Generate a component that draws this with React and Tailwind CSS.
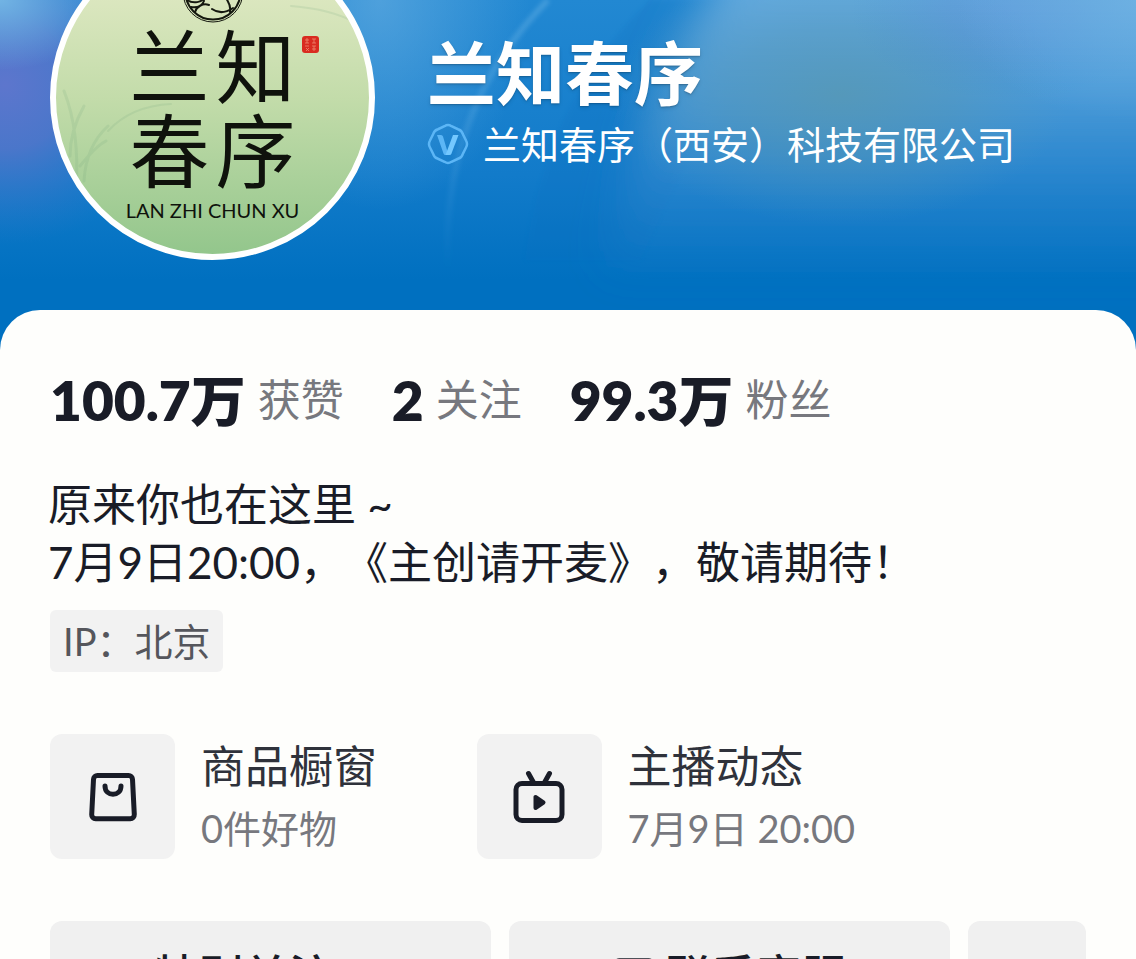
import { ChevronDown, MessageSquareText } from "lucide-react";

const STATS = [
  { value: "100.7万", label: "获赞" },
  { value: "2", label: "关注" },
  { value: "99.3万", label: "粉丝" },
];

const ENTRIES = [
  { title: "商品橱窗", note: "0件好物", Icon: BagIcon },
  { title: "主播动态", note: "7月9日 20:00", Icon: LiveIcon },
];

function BagIcon() {
  return (
    <svg viewBox="0 0 48 50" className="h-[50px] w-12" fill="none" stroke="#191c27" strokeWidth="5" strokeLinecap="round" strokeLinejoin="round">
      <path d="M8.5 3.5h31a4 4 0 0 1 4 3.8l1.8 35.2a4 4 0 0 1-4 4.2H6.7a4 4 0 0 1-4-4.2L4.5 7.3a4 4 0 0 1 4-3.8Z" />
      <path d="M16 14c0 11 16 11 16 0" />
    </svg>
  );
}

function LiveIcon() {
  return (
    <svg viewBox="0 0 52 54" className="h-[54px] w-[52px]" fill="none" stroke="#191c27" strokeWidth="5" strokeLinecap="round" strokeLinejoin="round">
      <rect x="3" y="13.5" width="46" height="37" rx="6" />
      <path d="m15.5 3.5 5 9M36.5 3.5l-5 9" />
      <path d="M22.5 27v11l8-5.5Z" fill="#191c27" strokeWidth="4" />
    </svg>
  );
}

function VerifiedIcon() {
  return (
    <svg viewBox="0 0 42 42" className="size-[42px] shrink-0" fill="none">
      <path
        d="M17.5 3.2Q21 1 24.5 3.2L31 6.2Q34.8 7.2 35.8 11L39 17.5Q41 21 39 24.5L35.8 31Q34.8 34.8 31 35.8L24.5 38.8Q21 41 17.5 38.8L11 35.8Q7.2 34.8 6.2 31L3 24.5Q1 21 3 17.5L6.2 11Q7.2 7.2 11 6.2Z"
        stroke="#5cb6f6"
        strokeWidth="2.5"
      />
      <path d="M10 12h4q1.5 0 2 1.500l5.500 18.500h-3q-1.500 0-2-1.500Z" fill="#5cb6f6" />
      <path d="M26 12h5.500l-7 18.500q-.6 1.500-2 1.500h-4Z" fill="#74c8ff" />
    </svg>
  );
}

function Emblem() {
  return (
    <svg viewBox="0 0 64 64" className="mx-auto size-16" fill="none" stroke="#15180f" strokeLinecap="round">
      <circle cx="32" cy="32" r="30" strokeWidth="1" />
      <circle cx="32" cy="32" r="27.5" strokeWidth="2" />
      <path d="M6 40c6 4 15 3 19-4M10 47c7 1 11-1 13-6M14 52c2-6 8-9 14-7M44 34c0 6 7 9 5 18M31 49c7 5 15 3 21-1" strokeWidth="2" />
    </svg>
  );
}

function Seal() {
  return (
    <svg viewBox="0 0 17 17" className="absolute left-[246px] top-[95px] size-[17px]">
      <rect width="17" height="17" rx="3" fill="#d92b20" />
      <path d="M3 4h4M5 2v5M3 7h4M10 3h4M12 3v4M10 7h4M3 10h4M4 12l3 3M7 12l-3 3M10 10h4M12 10v5M10 13h4" stroke="#ee8a72" strokeWidth="0.8" fill="none" />
    </svg>
  );
}

function Avatar() {
  return (
    <div className="relative -mt-[65px] size-[325px] shrink-0 overflow-hidden rounded-full border-6 border-white bg-linear-to-b from-[#e9edcb] via-[#c3dcaa] to-[#93c68c]">
      <svg viewBox="0 0 313 313" className="absolute inset-0 size-full" fill="none" stroke="#6fa07a" strokeLinecap="round" opacity="0.15">
        <path d="M20 250Q24 190 8 150M28 240Q30 205 52 185M14 215Q14 190 28 165M24 225Q40 205 50 200" strokeWidth="3" />
        <path d="M52 190Q75 165 115 163M235 65Q275 68 300 82" strokeWidth="2" />
      </svg>
      <div className="relative pt-[19px] text-[#0f120c]">
        <Emblem />
        <div className="mx-auto grid w-[172px] grid-cols-2 text-center text-[80px] leading-[84px]">
          <span>兰</span>
          <span>知</span>
          <span>春</span>
          <span>序</span>
        </div>
        <p className="whitespace-nowrap text-center text-[20px] leading-9">LAN ZHI CHUN XU</p>
      </div>
      <Seal />
    </div>
  );
}

function HeaderBackdrop() {
  return (
    <svg viewBox="0 0 1136 350" preserveAspectRatio="none" className="absolute inset-0 size-full" aria-hidden="true">
      <defs>
        <linearGradient id="base" x2="0" y2="1">
          <stop offset="0" stopColor="#2288d2" />
          <stop offset="0.5" stopColor="#127bca" />
          <stop offset="0.8" stopColor="#0070c0" />
        </linearGradient>
        <linearGradient id="veil" x2="0" y2="1">
          <stop offset="0" stopColor="#6fb2e4" />
          <stop offset="0.45" stopColor="#4f9cd8" stopOpacity="0.85" />
          <stop offset="0.75" stopColor="#3a8ccf" stopOpacity="0.35" />
          <stop offset="1" stopColor="#3a8ccf" stopOpacity="0" />
        </linearGradient>
        <radialGradient id="violet">
          <stop offset="0" stopColor="#5d76cd" />
          <stop offset="0.4" stopColor="#5475ca" stopOpacity="0.85" />
          <stop offset="1" stopColor="#3076c8" stopOpacity="0" />
        </radialGradient>
        <radialGradient id="sky">
          <stop offset="0" stopColor="#72b4e4" />
          <stop offset="1" stopColor="#72b4e4" stopOpacity="0" />
        </radialGradient>
        <radialGradient id="sage">
          <stop offset="0" stopColor="#5a98ae" stopOpacity="0.7" />
          <stop offset="0.5" stopColor="#5a98b2" stopOpacity="0.4" />
          <stop offset="1" stopColor="#5a9cc0" stopOpacity="0" />
        </radialGradient>
        <linearGradient id="ray" x2="0" y2="1">
          <stop offset="0" stopColor="#8cc8f0" stopOpacity="0.3" />
          <stop offset="1" stopColor="#8cc8f0" stopOpacity="0" />
        </linearGradient>
        <filter id="soft">
          <feGaussianBlur stdDeviation="2" />
        </filter>
        <filter id="haze" x="-20%" y="-20%" width="140%" height="140%">
          <feGaussianBlur stdDeviation="20" />
        </filter>
      </defs>
      <rect width="1136" height="350" fill="url(#base)" />
      <ellipse cx="5" cy="85" rx="170" ry="160" fill="url(#violet)" />
      <ellipse cx="0" cy="0" rx="110" ry="70" fill="url(#sky)" />
      <ellipse cx="380" cy="0" rx="150" ry="210" fill="url(#sky)" opacity="0.55" />
      <path d="M650 0Q545 100 525 260H640L760 0Z" fill="#0a6fc0" opacity="0.2" filter="url(#soft)" />
      <path d="M735 -40Q650 70 600 280H1200V-40Z" fill="url(#veil)" filter="url(#haze)" />
      <ellipse cx="840" cy="95" rx="230" ry="130" fill="url(#sage)" />
      <ellipse cx="1010" cy="10" rx="160" ry="90" fill="url(#violet)" opacity="0.2" />
      <ellipse cx="1136" cy="0" rx="180" ry="120" fill="url(#sky)" opacity="0.7" />
      <path d="M548 0Q440 110 448 270" fill="none" stroke="url(#ray)" strokeWidth="6" filter="url(#soft)" />
    </svg>
  );
}

function StatItem({ value, label }) {
  return (
    <a href="#" className="flex items-center gap-3">
      <strong className="text-[55px] font-extrabold leading-16 text-[#191c27]">{value}</strong>
      <span className="text-[43px] leading-16 text-[#77787e]">{label}</span>
    </a>
  );
}

function EntryLink({ title, note, Icon }) {
  return (
    <a href="#" className="flex items-center gap-[26px]">
      <span className="flex size-[125px] shrink-0 items-center justify-center rounded-xl bg-[#f2f2f2]">
        <Icon />
      </span>
      <span className="flex flex-col whitespace-nowrap leading-[62px]">
        <span className="text-[44px] text-[#2f323b]">{title}</span>
        <span className="text-[38px] text-[#77787e]">{note}</span>
      </span>
    </a>
  );
}

export default function App() {
  return (
    <div className="h-screen overflow-hidden bg-[#fefefc] font-[Lato,'Noto_Sans_CJK_SC',sans-serif] [text-spacing-trim:space-all]" lang="zh-CN">
      <header className="relative h-[350px] overflow-hidden">
        <HeaderBackdrop />
        <div className="relative flex items-start gap-[52px] px-[50px]">
          <Avatar />
          <div className="pt-[30px] text-white">
            <h1 className="text-[69px] font-bold leading-[88px] text-shadow-md">兰知春序</h1>
            <p className="flex items-center gap-[14px] whitespace-nowrap text-[38px] leading-[52px]">
              <VerifiedIcon />
              兰知春序（西安）科技有限公司
            </p>
          </div>
        </div>
      </header>

      <main className="relative -mt-10 rounded-t-[40px] bg-[#fefefc] px-[50px] pt-[58px]">
        <div className="flex gap-12 whitespace-nowrap">
          {STATS.map((s) => (
            <StatItem key={s.label} {...s} />
          ))}
        </div>

        <p className="-mx-0.5 mt-[43px] text-[44px] leading-[58px] text-[#191c27]">
          原来你也在这里 ~
          <br />
          7月9日20:00，《主创请开麦》，敬请期待！
        </p>
        <span className="mt-[19px] inline-block rounded-md bg-[#f2f2f2] px-[13px] text-[38px] leading-[62px] text-[#55565c]">
          IP：北京
        </span>

        <nav className="mt-[62px] grid grid-cols-[7fr_10fr]">
          {ENTRIES.map((e) => (
            <EntryLink key={e.title} {...e} />
          ))}
        </nav>

        <div className="mt-[62px] flex gap-[18px] text-[45px] font-medium text-[#191c27]">
          <button type="button" className="flex h-28 flex-1 items-center justify-center gap-2.5 rounded-xl bg-[#f0f0f0]">
            特别关注
            <ChevronDown size={44} />
          </button>
          <button type="button" className="flex h-28 flex-1 items-center justify-center gap-2.5 rounded-xl bg-[#f0f0f0]">
            <MessageSquareText size={44} strokeWidth={2.5} />
            联系客服
          </button>
          <button type="button" aria-label="更多" className="flex h-28 w-[118px] items-center justify-center rounded-xl bg-[#f0f0f0]">
            <ChevronDown size={40} />
          </button>
        </div>
      </main>
    </div>
  );
}
